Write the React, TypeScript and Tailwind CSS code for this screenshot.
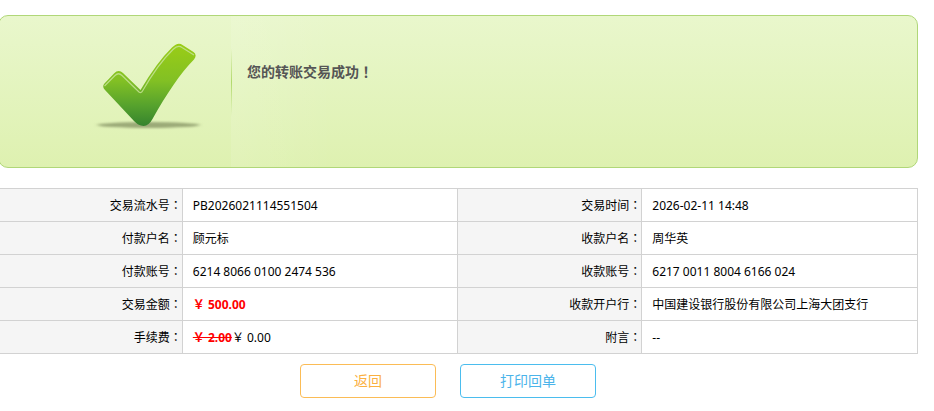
import React from "react";

type Entry = { label: string; value: React.ReactNode };

const rows: [Entry, Entry][] = [
  [
    { label: "交易流水号", value: "PB2026021114551504" },
    { label: "交易时间", value: "2026-02-11 14:48" },
  ],
  [
    { label: "付款户名", value: "顾元标" },
    { label: "收款户名", value: "周华英" },
  ],
  [
    { label: "付款账号", value: "6214 8066 0100 2474 536" },
    { label: "收款账号", value: "6217 0011 8004 6166 024" },
  ],
  [
    { label: "交易金额", value: <strong className="font-bold text-[#ff0000]">￥ 500.00</strong> },
    { label: "收款开户行", value: "中国建设银行股份有限公司上海大团支行" },
  ],
  [
    {
      label: "手续费",
      value: (
        <>
          <del className="font-bold text-[#ff0000] line-through">￥ 2.00</del>￥ 0.00
        </>
      ),
    },
    { label: "附言", value: "--" },
  ],
];

function SuccessMark() {
  return (
    <svg viewBox="90 38 116 96" className="h-24 w-[116px] shrink-0" role="img" aria-label="成功">
      <defs>
        <linearGradient id="tick" x1="0" y1="44" x2="0" y2="126" gradientUnits="userSpaceOnUse">
          <stop offset="0" stopColor="#9acd16" />
          <stop offset="0.45" stopColor="#82c024" />
          <stop offset="0.75" stopColor="#56a22d" />
          <stop offset="1" stopColor="#35832e" />
        </linearGradient>
        <filter id="soft" x="-10%" y="-100%" width="120%" height="300%">
          <feGaussianBlur stdDeviation="2 1.2" />
        </filter>
      </defs>
      <ellipse cx="148.500" cy="125" rx="51" ry="3" fill="#8f9d6c" fillOpacity="0.85" filter="url(#soft)" />
      <path
        d="M104 84 L114 73.500 Q118.500 69 123 73 L140.500 90 Q157 62 172 47.500 Q178 41.500 182.500 45 L193.500 52 Q197.500 55 194 59.500 C181 72 166 95 152.500 119 Q148 127.500 141 125.500 Q138 125 134 121 L105 90 Q102 87 104 84 Z"
        fill="url(#tick)"
      />
      <path
        d="M104.500 86 L115 75.500 Q118.500 72 122 75.500 L139 92 Q141 93.500 142.500 91 Q158 64 173 49.500 Q178 44.500 182 47.500 L194 55"
        fill="none"
        stroke="#c5e396"
        strokeWidth="1.2"
        strokeOpacity="0.85"
      />
    </svg>
  );
}

function Cells({ label, value }: Entry) {
  return (
    <>
      <th
        scope="row"
        className="h-[33px] border-b border-l border-[#d2d2d2] bg-[#f5f5f5] p-0 text-right font-normal"
      >
        {label}
        <span className="font-['Noto_Sans_CJK_JP',sans-serif]">：</span>
      </th>
      <td className="h-[33px] border-b border-l border-[#d2d2d2] pt-0.5 pr-0 pb-0 pl-2.5">{value}</td>
    </>
  );
}

export default function App() {
  return (
    <main className="-ml-0.5 mr-4 pt-[15px] font-['Noto_Sans','Noto_Sans_CJK_SC',sans-serif] text-xs text-black">
      <section className="flex h-[153px] overflow-hidden rounded-[10px] border border-[#b0d778] bg-linear-to-b from-[#e9f7cc] to-[#def1b0]">
        <div className="flex w-[232px] shrink-0 justify-end pt-[22px] pr-[25px]">
          <SuccessMark />
        </div>
        <div className="mt-8 h-[68px] w-px bg-linear-to-b from-transparent via-[#a9d55c] to-transparent" />
        <div className="-ml-px flex-1 bg-linear-to-r from-white/10 to-transparent to-15% pt-[45px] pl-4">
          <h1 className="text-sm leading-5 font-bold text-[#555555]">
            您的转账交易成功<span className="font-['Noto_Sans_CJK_JP',sans-serif]">！</span>
          </h1>
        </div>
      </section>

      <table className="mt-5 w-full table-fixed border-separate border-spacing-0 border-t border-r border-[#d2d2d2] leading-4">
        <colgroup>
          <col className="w-[20%]" />
          <col className="w-[30%]" />
          <col className="w-[20%]" />
          <col className="w-[30%]" />
        </colgroup>
        <tbody>
          {rows.map(([left, right]) => (
            <tr key={left.label}>
              <Cells {...left} />
              <Cells {...right} />
            </tr>
          ))}
        </tbody>
      </table>

      <div className="mt-2.5 mr-5 flex justify-center gap-6 text-sm leading-5">
        <button type="button" className="h-[34px] w-[136px] rounded border border-[#fbbc56] bg-white text-[#fbb040]">
          返回
        </button>
        <button type="button" className="h-[34px] w-[136px] rounded border border-[#4bbdee] bg-white text-[#4bb4ea]">
          打印回单
        </button>
      </div>
    </main>
  );
}
